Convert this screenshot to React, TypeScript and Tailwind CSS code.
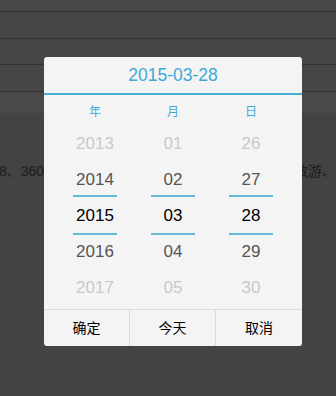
const font = { fontFamily: '"Liberation Sans", Arial, "Noto Sans CJK SC", sans-serif' };

type Col = { label: string; items: string[] };

const cols: Col[] = [
  { label: '年', items: ['2013', '2014', '2015', '2016', '2017'] },
  { label: '月', items: ['01', '02', '03', '04', '05'] },
  { label: '日', items: ['26', '27', '28', '29', '30'] },
];

const itemColor = ['text-[#c9c9c9]', 'text-[#555555]', 'text-black', 'text-[#555555]', 'text-[#c9c9c9]'];

const Wheel = ({ col }: { col: Col }) => (
  <div className="relative flex flex-col">
    {col.items.map((item, i) => (
      <div key={item} className={`flex h-[36px] items-center justify-center pt-[2px] text-[17px] ${itemColor[i]}`}>
        {item}
      </div>
    ))}
    {/* selection marks */}
    <div className="absolute left-1/2 top-[70px] h-[2px] w-[44px] -translate-x-1/2 bg-[#66b8d6]" />
    <div className="absolute left-1/2 top-[108px] h-[2px] w-[44px] -translate-x-1/2 bg-[#66b8d6]" />
  </div>
);

export default function App() {
  return (
    <div className="relative h-[396px] w-[336px] overflow-hidden bg-[#434343]" style={font}>
      {/* page behind the overlay */}
      <div className="h-[11px] bg-[#474747]" />
      <div className="h-[27px] border-t border-[#333333] bg-[#464646]" />
      <div className="h-[26px] border-t border-[#333333] bg-[#464646]" />
      <div className="h-[27px] border-t border-[#333333] bg-[#464646]" />
      <div className="h-[22px] border-t border-[#333333] bg-[#494949]" />
      <div className="mt-[49px] flex h-[18px] items-center justify-between overflow-hidden whitespace-nowrap text-[14px] text-[#1c1c1c]">
        <span className="-ml-[1px]">8、360</span>
        <span>数游、</span>
      </div>

      {/* date picker dialog */}
      <div className="absolute left-[44px] top-[57px] flex h-[289px] w-[258px] flex-col overflow-hidden rounded-[3px] bg-[#f4f4f4]">
        <div className="flex h-[36px] items-center justify-center pt-[1px] text-[17.5px] text-[#3fa8d9]">
          2015-03-28
        </div>
        <div className="h-[2px] bg-[#4aaed3]" />
        <div className="grid h-[30px] grid-cols-3 items-center px-[12px] pt-[3px] text-[12px] text-[#3fa8d9]">
          {cols.map((c) => (
            <div key={c.label} className="text-center">
              {c.label}
            </div>
          ))}
        </div>
        <div className="grid grid-cols-3 px-[12px]">
          {cols.map((c) => (
            <Wheel key={c.label} col={c} />
          ))}
        </div>
        <div className="mt-[4px] grid h-[37px] grid-cols-3 border-t border-[#dcdcdc] text-[14px] text-black">
          <div className="flex items-center justify-center border-r border-[#dcdcdc]">确定</div>
          <div className="flex items-center justify-center border-r border-[#dcdcdc]">今天</div>
          <div className="flex items-center justify-center">取消</div>
        </div>
      </div>
    </div>
  );
}
